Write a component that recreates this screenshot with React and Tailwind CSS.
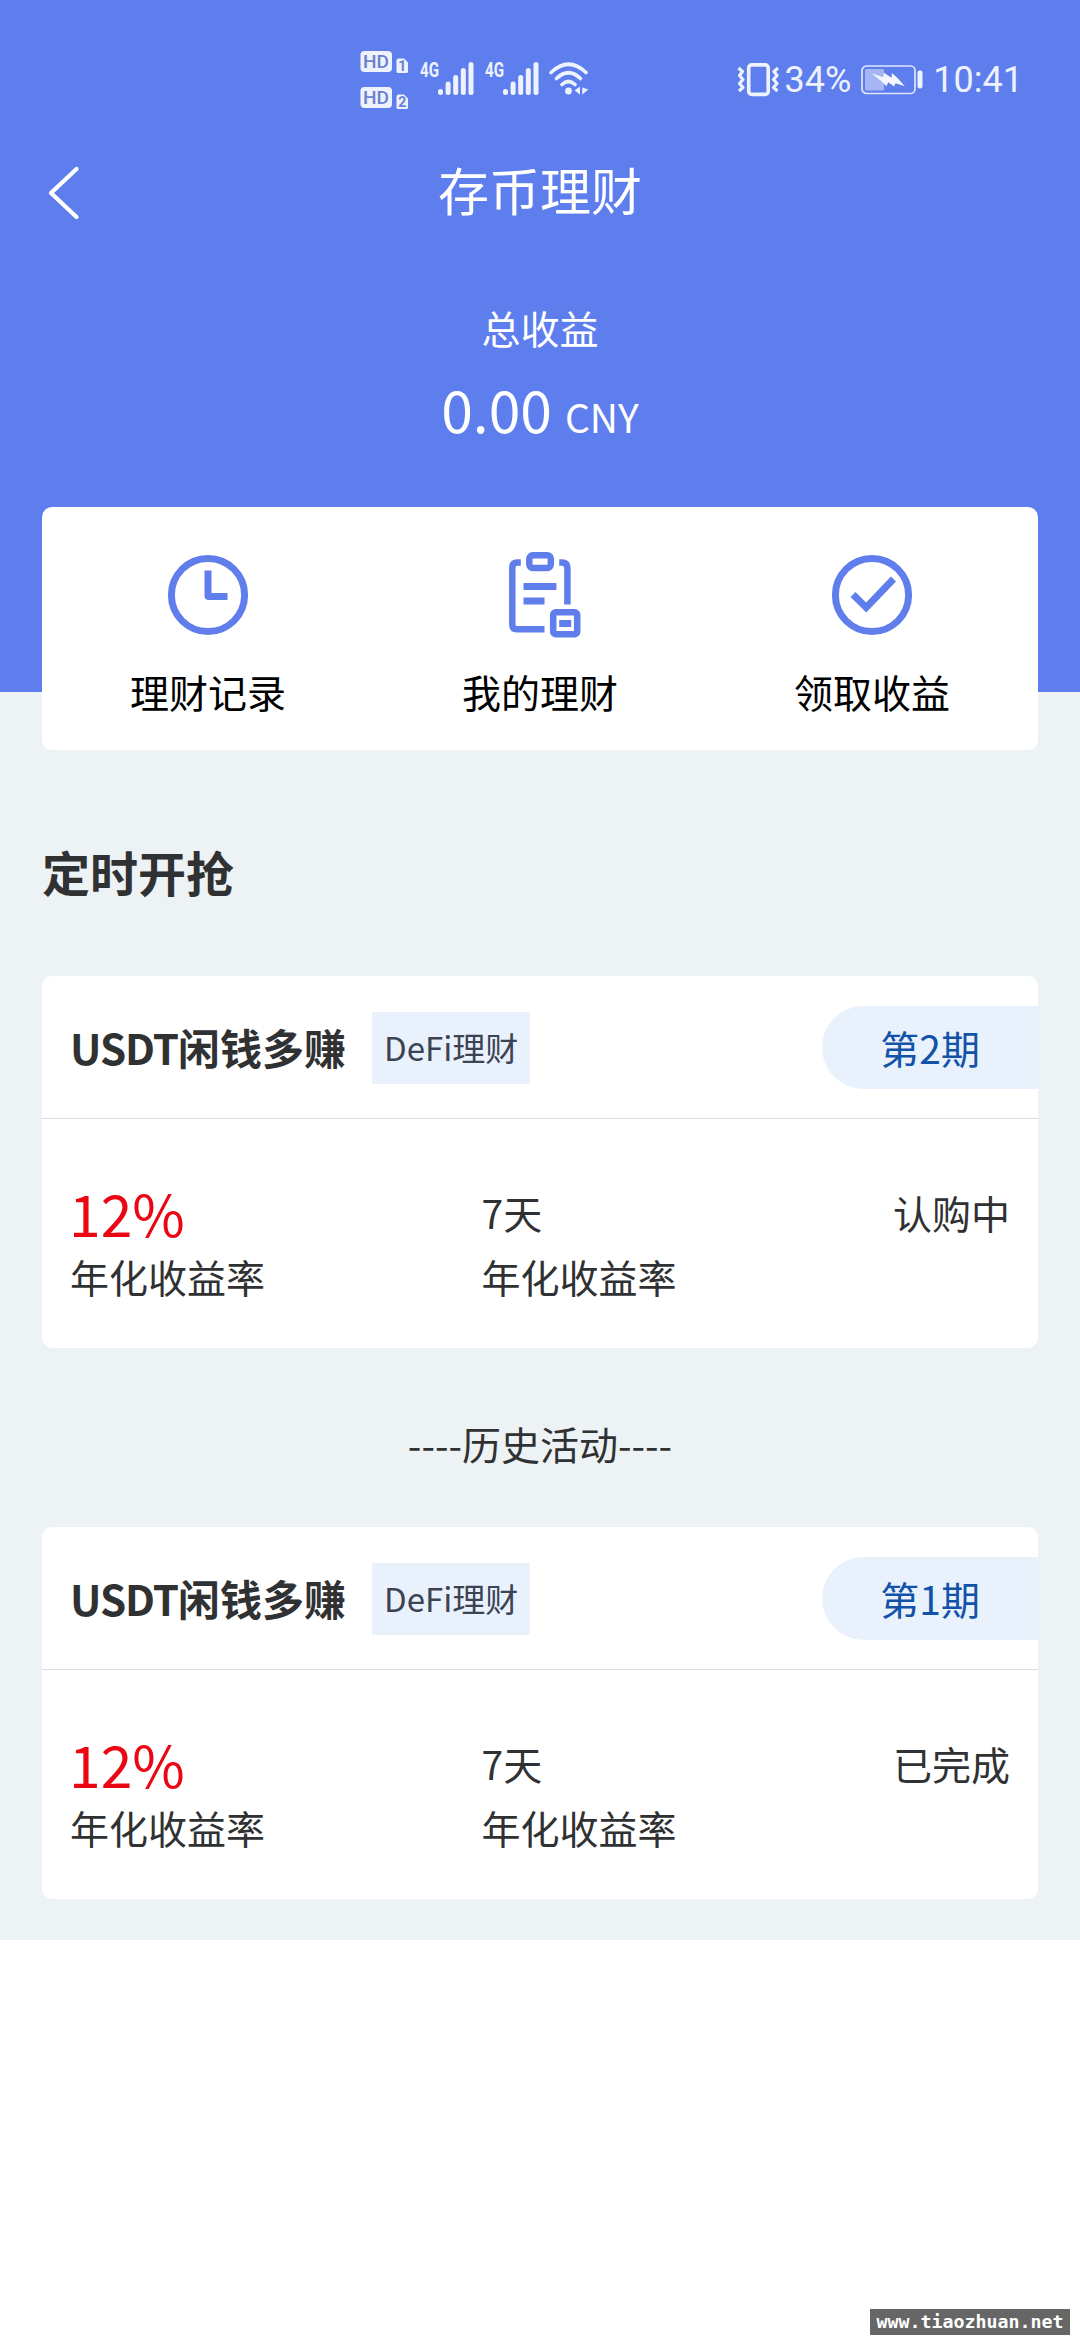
import React from "react";

function SimBadge({ n }) {
  return (
    <svg width="48" height="24" viewBox="0 0 48 24" className="overflow-visible">
      <rect x="0.5" y="1" width="31.5" height="21" rx="4" fill="#eef2fd" />
      <text x="3" y="18.2" fontFamily="Roboto" fontWeight="500" fontSize="19" textLength="26" lengthAdjust="spacingAndGlyphs" fill="#6b80cf">HD</text>
      <path d="M36.5 10.5 q0 -2 2 -2 h5.500 l4 4 v9 q0 1.500 -1.500 1.500 h-8.500 q-1.500 0 -1.500 -1.500 z" fill="#eef2fd" />
      <text x="42.200" y="21.200" textAnchor="middle" fontFamily="Roboto" fontWeight="700" fontSize="14" fill="#6b80cf">{n}</text>
    </svg>
  );
}

function Signal() {
  return (
    <svg width="55" height="40" viewBox="0 -4 55 40" className="overflow-visible">
      <text x="0" y="17" fontFamily="Roboto" fontWeight="700" fontSize="20" textLength="19" lengthAdjust="spacingAndGlyphs" fill="#eef2fd">4G</text>
      <g stroke="#eef2fd" strokeWidth="5" strokeLinecap="round">
        <path d="M20.500 31.500V32.500M28.100 24V32.500M35.700 17.500V32.500M43.300 10.500V32.500M51 4.500V32.500" />
      </g>
    </svg>
  );
}

function Wifi() {
  return (
    <svg width="42" height="36" viewBox="0 0 42 36" fill="none" stroke="#eef2fd" strokeWidth="3.600" strokeLinecap="round">
      <path d="M3 12.500 Q20.500 -4 38 12.500" />
      <path d="M8.500 18.500 Q20.500 7 32.500 18.500" />
      <path d="M14 24.500 Q20.500 18.500 27 24.500" />
      <circle cx="20.500" cy="31" r="3.400" fill="#eef2fd" stroke="none" />
      <path d="M32 26.500v8l-5.500-4zM34.300 27.500v7l6-5z" fill="#eef2fd" stroke="none" />
    </svg>
  );
}

function Vibrate() {
  return (
    <svg width="42" height="34" viewBox="0 0 42 34" fill="none" stroke="#eef2fd">
      <rect x="11.700" y="1.900" width="19.500" height="29.500" rx="3" strokeWidth="3.600" />
      <path d="M1.500 5l4 3.500-3 4 3.500 4-3.500 4 3.500 4-4 3.500" strokeWidth="3.200" strokeLinejoin="round" />
      <path d="M41 5l-4 3.500 3 4-3.500 4 3.500 4-3.500 4 4 3.500" strokeWidth="3.200" strokeLinejoin="round" />
    </svg>
  );
}

function Battery() {
  return (
    <svg width="62" height="30" viewBox="0 0 62 30">
      <rect x="1" y="1" width="53" height="27.500" rx="4.500" fill="none" stroke="#dfe6fc" strokeWidth="1.700" />
      <rect x="4" y="4" width="19" height="21.500" rx="1.500" fill="#a5b6f3" />
      <path d="M10.500 8.200L22.200 12.200L23 7.700L30.500 12.800L31 8L37.200 13.800L43.800 21.200L34.500 18.200L33.200 21.500L27.200 17.200L25.500 21.200L20.500 16.200Z" fill="#f4f7ff" />
      <rect x="56.500" y="5.500" width="5" height="18" rx="2.200" fill="#eef2fd" />
    </svg>
  );
}

function ClockIcon() {
  return (
    <svg width="90" height="90" viewBox="0 0 90 90" fill="none" stroke="#5f7eec" strokeWidth="7">
      <circle cx="45" cy="45" r="36.600" />
      <path d="M45 20.500V45.500Q45 46.500 46 46.500H64.500" />
    </svg>
  );
}

function ClipboardIcon() {
  return (
    <svg width="90" height="90" viewBox="0 0 90 90" fill="none" stroke="#5f7eec" strokeWidth="6.500">
      <path d="M25.800 12.500H22.500Q17.300 12.500 17.300 17.500V74.500Q17.300 79.300 22 79.300H49.500" />
      <path d="M64.200 12.500H67Q72.400 12.500 72.400 18V54.500" />
      <rect x="34.300" y="5.300" width="21.500" height="12.600" rx="3.500" />
      <path d="M28.500 36.500H61.400M28.500 51H49.500" strokeWidth="7" />
      <rect x="58.200" y="62.300" width="24" height="22" rx="2.500" />
      <rect x="64.200" y="70" width="12" height="7" fill="#5f7eec" stroke="none" />
    </svg>
  );
}

function CheckIcon() {
  return (
    <svg width="90" height="90" viewBox="0 0 90 90" fill="none" stroke="#5f7eec" strokeWidth="7">
      <circle cx="45" cy="45" r="36.600" />
      <path d="M26 44.500L39.200 57.500L66.500 29" />
    </svg>
  );
}

function Action({ icon, label }) {
  return (
    <div className="flex flex-col items-center pt-[43px]">
      {icon}
      <span className="mt-[22px] text-[39px] leading-[58px] text-black">{label}</span>
    </div>
  );
}

function ProductCard({ period, status }) {
  return (
    <section className="h-[372px] overflow-hidden rounded-[10px] bg-white">
      <div className="flex h-[143px] items-center border-b border-[#dcdee1] pl-[28px]">
        <h3 className="text-[42px] leading-[60px] font-bold text-[#303133]">
          <span className="tracking-[-1px]">USDT</span>闲钱多赚
        </h3>
        <span className="mt-[2px] ml-[26px] flex h-[72px] items-center bg-[#e9f1fc] px-[12px] text-[33px] text-[#3c4353]">DeFi理财</span>
        <span className="mt-px ml-auto flex h-[83px] items-center rounded-l-full bg-[#e8f1fc] px-[58px] text-[39px] text-[#1253a8]">{period}</span>
      </div>
      <div className="flex justify-between px-[28px] pt-[61px] text-[39px] leading-[64px] text-[#303133]">
        <div>
          <p className="-ml-px text-[57px] text-[#ea0613]">12%</p>
          <p>年化收益率</p>
        </div>
        <div>
          <p>7天</p>
          <p>年化收益率</p>
        </div>
        <p>{status}</p>
      </div>
    </section>
  );
}

export default function App() {
  return (
    <div className="flex h-[2340px] w-[1080px] flex-col bg-white font-['Noto_Sans_CJK_SC',sans-serif]">
      <header className="h-[692px] shrink-0 bg-[#5e7eee] text-white">
        <div className="flex h-[144px] items-start pl-[360px] pr-[57px] pt-[50px]">
          <div className="flex flex-col gap-[12px]">
            <SimBadge n="1" />
            <SimBadge n="2" />
          </div>
          <div className="ml-[12px] mt-[6px] flex gap-[10px]">
            <Signal />
            <Signal />
          </div>
          <div className="ml-[8px] mt-[10px]">
            <Wifi />
          </div>
          <div className="ml-auto flex h-[60px] items-center font-['Roboto',sans-serif] text-[36px] text-[#eef2fd]">
            <Vibrate />
            <span className="ml-[6px]">34%</span>
            <span className="ml-[10px]"><Battery /></span>
            <span className="ml-[10px]">10:41</span>
          </div>
        </div>
        <div className="grid h-[92px] grid-cols-[1fr_auto_1fr] items-center pl-[46px] pr-[46px]">
          <svg width="36" height="56" viewBox="0 0 36 56" className="mt-[6px]" fill="none" stroke="white" strokeWidth="4.200" strokeLinecap="round" strokeLinejoin="round">
            <path d="M30.500 4L5 28L30.500 52" />
          </svg>
          <h1 className="-mt-[3px] text-[51px] leading-[72px]">存币理财</h1>
        </div>
        <div className="pt-[62px] text-center">
          <p className="text-[39px] leading-[58px]">总收益</p>
          <p className="mt-[14px] text-[57px] leading-[76px]">
            0.00<span className="ml-[13px] text-[39px]">CNY</span>
          </p>
        </div>
      </header>

      <main className="h-[1248px] shrink-0 bg-[#edf2f5] px-[42px]">
        <nav className="-mt-[185px] grid h-[243px] grid-cols-3 rounded-[10px] bg-white">
          <Action icon={<ClockIcon />} label="理财记录" />
          <Action icon={<ClipboardIcon />} label="我的理财" />
          <Action icon={<CheckIcon />} label="领取收益" />
        </nav>
        <h2 className="mt-[85px] mb-[69px] text-[48px] leading-[72px] font-bold text-[#303133]">定时开抢</h2>
        <ProductCard period="第2期" status="认购中" />
        <p className="pt-[73px] pb-[61px] text-center text-[39px] leading-[45px] text-[#303133]">----历史活动----</p>
        <ProductCard period="第1期" status="已完成" />
      </main>

      <footer className="mt-auto mb-[5px] flex justify-end pr-[10px]">
        <span className="flex h-[26px] w-[200px] items-center justify-center bg-[#666666] font-['DejaVu_Sans_Mono',monospace] text-[18.300px] font-bold text-white">www.tiaozhuan.net</span>
      </footer>
    </div>
  );
}
